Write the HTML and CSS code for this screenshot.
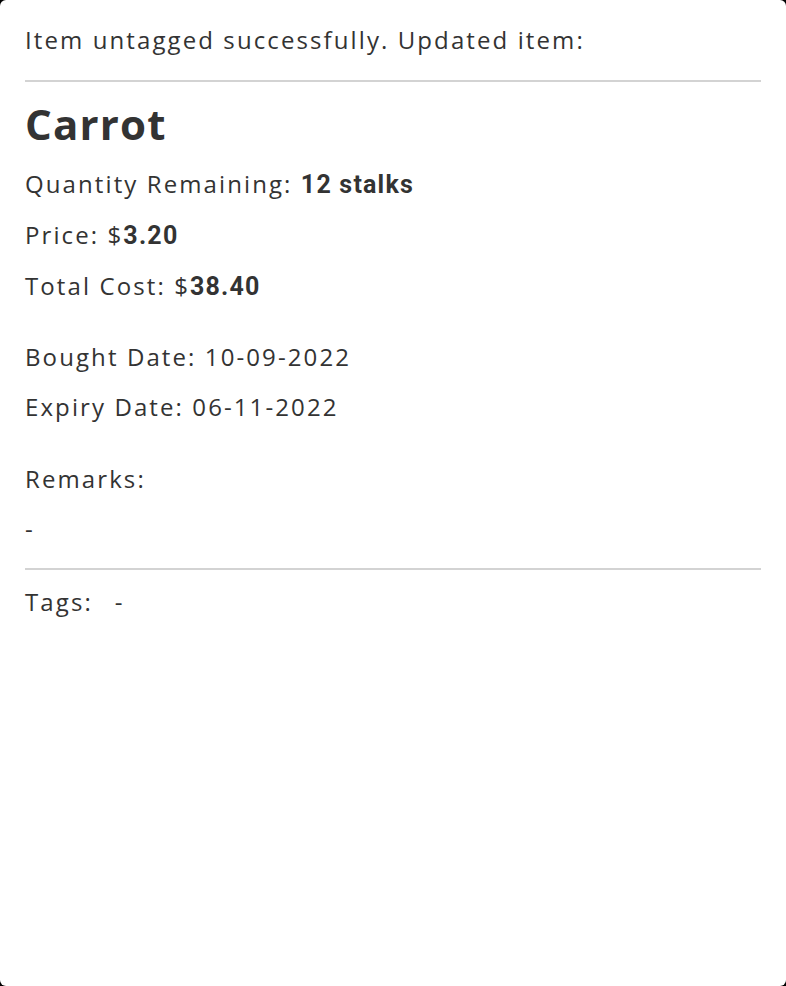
FILE: index.html
```html
<!DOCTYPE html>
<html>
<head>
<meta charset="utf-8">
<link rel="stylesheet" href="styles.css">
</head>
<body>
<div class="card">
  <p class="msg">Item untagged successfully. Updated item:</p>
  <hr class="rule">
  <h1 class="title">Carrot</h1>
  <div class="group">
    <p class="line">Quantity Remaining: <b class="num">12 stalks</b></p>
    <p class="line">Price: $<b class="num">3.20</b></p>
    <p class="line">Total Cost: $<b class="num">38.40</b></p>
  </div>
  <div class="group">
    <p class="line">Bought Date: 10-09-2022</p>
    <p class="line">Expiry Date: 06-11-2022</p>
  </div>
  <div class="group group-remarks">
    <p class="line">Remarks:</p>
    <p class="line">-</p>
  </div>
  <hr class="rule rule-low">
  <div class="tags"><span>Tags:</span><span>-</span></div>
</div>
</body>
</html>
```
FILE: styles.css
```css
html, body {
  margin: 0;
  padding: 0;
  background: #000;
}
.card {
  box-sizing: border-box;
  width: 786px;
  height: 986px;
  background: #fff;
  border-radius: 6px;
  padding: 21px 25px 0 25px;
  color: #333;
  font-family: "Open Sans", sans-serif;
  font-size: 24px;
  letter-spacing: 2.1px;
}
.msg {
  margin: 0;
  line-height: 38px;
}
.rule {
  border: 0;
  height: 2px;
  background: #d3d3d3;
  margin: 21px 0 0 0;
}
.title {
  margin: 15px 0 0 0;
  font-family: "Open Sans", sans-serif;
  font-size: 42px;
  font-weight: 700;
  line-height: 54px;
  letter-spacing: 1.2px;
}
.group {
  display: flex;
  flex-direction: column;
  gap: 12px;
}
.group + .group {
  margin-top: 32px;
}
.group + .group-remarks {
  margin-top: 34px;
}
.title + .group {
  margin-top: 14px;
}
.line {
  margin: 0;
  line-height: 38px;
}
.num {
  font-family: Roboto, sans-serif;
  font-weight: 700;
  font-size: 25px;
  letter-spacing: 1.2px;
}
.rule-low {
  margin-top: 20px;
}
.tags {
  margin-top: 13px;
  display: flex;
  gap: 22px;
  line-height: 38px;
}
```
